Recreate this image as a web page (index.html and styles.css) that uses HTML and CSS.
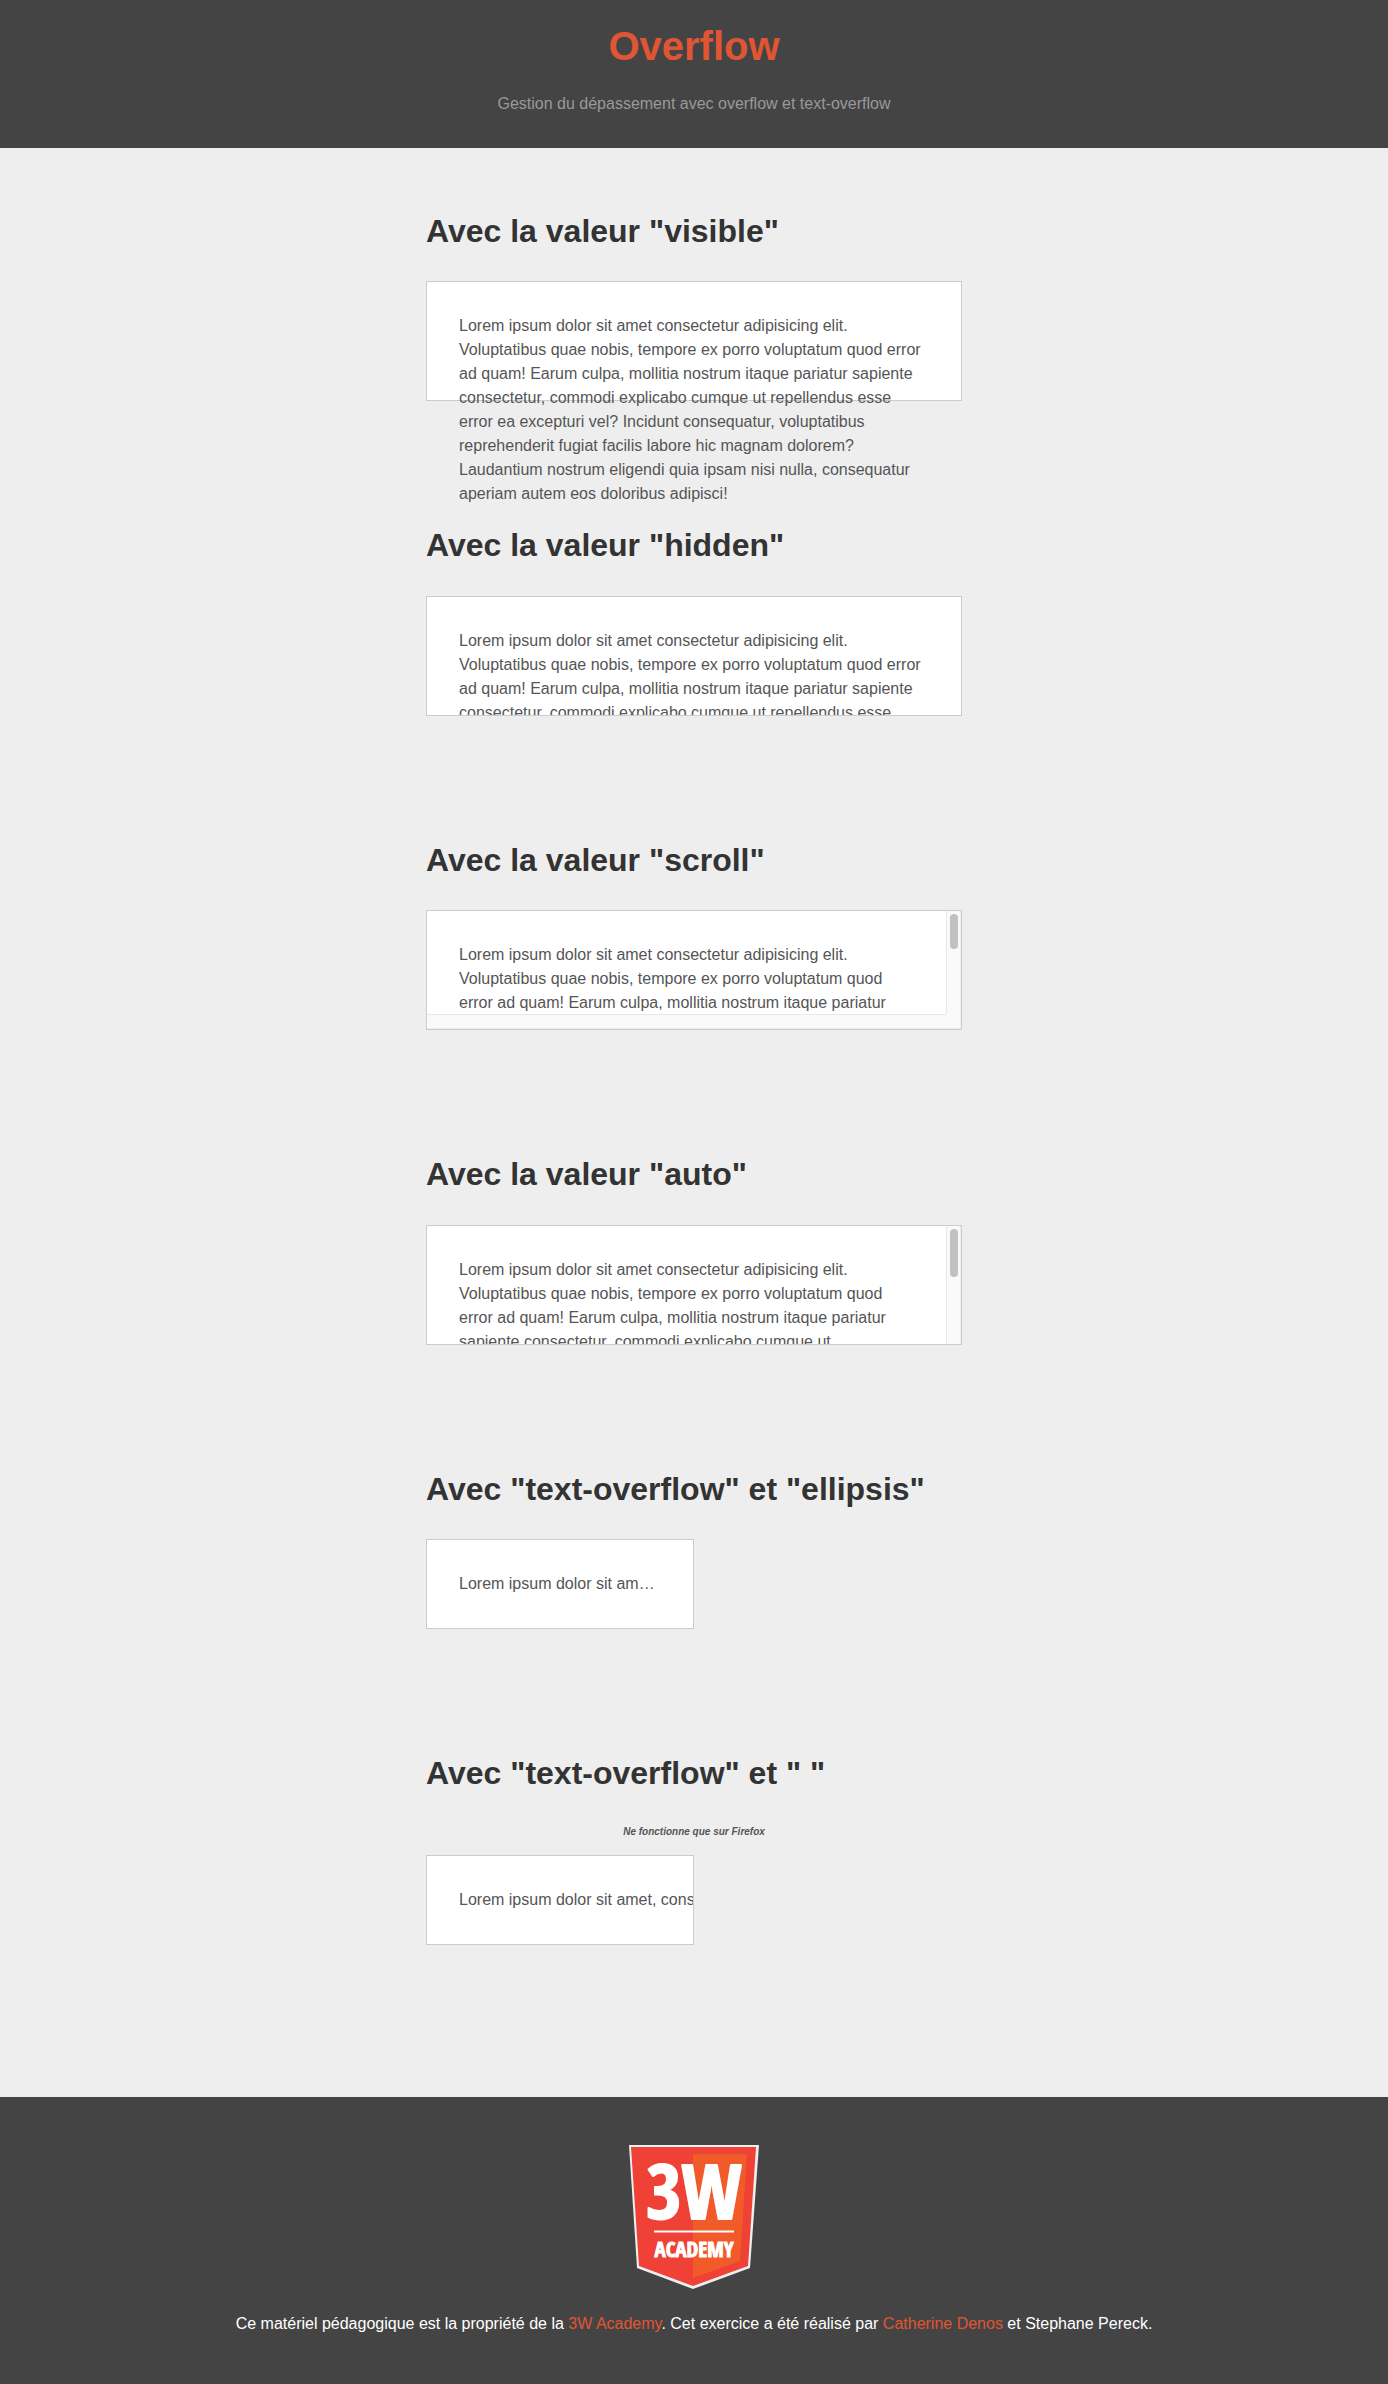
FILE: index.html
```html
<!DOCTYPE html>
<html lang="fr">
<head>
  <meta charset="utf-8">
  <meta name="viewport" content="width=device-width, initial-scale=1">
  <title>Overflow</title>
  <link rel="stylesheet" href="styles.css">
</head>
<body>
  <header class="site-header">
    <h1>Overflow</h1>
    <p>Gestion du dépassement avec overflow et text-overflow</p>
  </header>

  <main class="content">
    <section>
      <h2>Avec la valeur "visible"</h2>
      <div class="box box-visible">
        <p>Lorem ipsum dolor sit amet consectetur adipisicing elit. Voluptatibus quae nobis, tempore ex porro voluptatum quod error ad quam! Earum culpa, mollitia nostrum itaque pariatur sapiente consectetur, commodi explicabo cumque ut repellendus esse error ea excepturi vel? Incidunt consequatur, voluptatibus reprehenderit fugiat facilis labore hic magnam dolorem? Laudantium nostrum eligendi quia ipsam nisi nulla, consequatur aperiam autem eos doloribus adipisci!</p>
      </div>
    </section>

    <section>
      <h2>Avec la valeur "hidden"</h2>
      <div class="box box-hidden">
        <p>Lorem ipsum dolor sit amet consectetur adipisicing elit. Voluptatibus quae nobis, tempore ex porro voluptatum quod error ad quam! Earum culpa, mollitia nostrum itaque pariatur sapiente consectetur, commodi explicabo cumque ut repellendus esse error ea excepturi vel? Incidunt consequatur, voluptatibus reprehenderit fugiat facilis labore hic magnam dolorem? Laudantium nostrum eligendi quia ipsam nisi nulla, consequatur aperiam autem eos doloribus adipisci!</p>
      </div>
    </section>

    <section>
      <h2>Avec la valeur "scroll"</h2>
      <div class="box box-bars box-scroll">
        <div class="pane" tabindex="0">
          <p>Lorem ipsum dolor sit amet consectetur adipisicing elit. Voluptatibus quae nobis, tempore ex porro voluptatum quod error ad quam! Earum culpa, mollitia nostrum itaque pariatur sapiente consectetur, commodi explicabo cumque ut repellendus esse error ea excepturi vel? Incidunt consequatur, voluptatibus reprehenderit fugiat facilis labore hic magnam dolorem? Laudantium nostrum eligendi quia ipsam nisi nulla, consequatur aperiam autem eos doloribus adipisci!</p>
        </div>
        <div class="track track-y"><div class="thumb"></div></div>
        <div class="track track-x"></div>
        <div class="track track-corner"></div>
      </div>
    </section>

    <section>
      <h2>Avec la valeur "auto"</h2>
      <div class="box box-bars">
        <div class="pane" tabindex="0">
          <p>Lorem ipsum dolor sit amet consectetur adipisicing elit. Voluptatibus quae nobis, tempore ex porro voluptatum quod error ad quam! Earum culpa, mollitia nostrum itaque pariatur sapiente consectetur, commodi explicabo cumque ut repellendus esse error ea excepturi vel? Incidunt consequatur, voluptatibus reprehenderit fugiat facilis labore hic magnam dolorem? Laudantium nostrum eligendi quia ipsam nisi nulla, consequatur aperiam autem eos doloribus adipisci!</p>
        </div>
        <div class="track track-y"><div class="thumb"></div></div>
      </div>
    </section>

    <section>
      <h2>Avec "text-overflow" et "ellipsis"</h2>
      <div class="box box-line box-ellipsis">
        <p>Lorem ipsum dolor sit amet, consectetur adipisicing elit.</p>
      </div>
    </section>

    <section>
      <h2>Avec "text-overflow" et " "</h2>
      <p class="note">Ne fonctionne que sur Firefox</p>
      <div class="box box-line">
        <p>Lorem ipsum dolor sit amet, consectetur adipisicing elit.</p>
      </div>
    </section>
  </main>

  <footer class="site-footer">
    <svg class="logo" width="130" height="144" viewBox="0 0 130 144" role="img" aria-label="3W Academy">
      <path fill="#ecf0f1" d="M0 0H130L121 123L64 144L8 123Z"/>
      <path fill="#ef4136" d="M2 2H127L119 121L64 141L10 121Z"/>
      <path fill="#f15a29" d="M64 9H118L111 116L64 133Z"/>
      <text class="logo-main" x="65" y="74">3W</text>
      <path stroke="#fff" stroke-width="2" d="M25 86.500H105"/>
      <text class="logo-sub" x="65" y="112">ACADEMY</text>
    </svg>
    <p>Ce matériel pédagogique est la propriété de la <a href="#">3W Academy</a>. Cet exercice a été réalisé par <a href="#">Catherine Denos</a> et Stephane Pereck.</p>
  </footer>
</body>
</html>
```
FILE: styles.css
```css
* {
  box-sizing: border-box;
}

body {
  margin: 0;
  background: #eee;
  color: #555;
  font: 16px/1.5 "Helvetica Neue", Helvetica, "Liberation Sans", Arial, sans-serif;
}

p {
  margin: 0;
}

a {
  color: #e05533;
  text-decoration: none;
}

.site-header {
  padding: 16px 32px 32px;
  background: #444;
  color: #999;
  text-align: center;
}

h1 {
  margin: 0 0 16px;
  color: #e05533;
  font-size: 40px;
}

h2 {
  color: #333;
  font-size: 32px;
}

.content {
  max-width: 600px;
  margin: 0 auto;
  padding: 32px;
  display: flow-root;
}

.box {
  height: 120px;
  margin-bottom: 120px;
  padding: 32px;
  border: 1px solid #ccc;
  background: #fff;
}

.box-visible {
  overflow: visible;
}

.box-hidden {
  overflow: hidden;
}

/* Scrollable boxes: text pane plus always-visible scroll tracks */
.box-bars {
  display: grid;
  grid-template-columns: 1fr 15px;
  grid-template-rows: minmax(0, 1fr);
  padding: 0;
}

.box-scroll {
  grid-template-rows: minmax(0, 1fr) 15px;
}

.pane {
  padding: 32px;
  overflow: auto;
  scrollbar-width: none;
}

.track {
  background: #fafafa;
}

.track-y {
  padding: 3px 2px 3px 3px;
  border-right: 1px solid #eee;
  border-left: 1px solid #e8e8e8;
}

.track-x {
  border-top: 1px solid #e8e8e8;
  border-bottom: 1px solid #eee;
}

.track-corner {
  border-right: 1px solid #eee;
  border-bottom: 1px solid #eee;
}

.thumb {
  height: 48px;
  border-radius: 4px;
  background: #c1c1c1;
}

.box-scroll .thumb {
  height: 35px;
}

.box-line {
  width: 50%;
  height: auto;
  overflow: hidden;
  white-space: nowrap;
}

.box-ellipsis p {
  overflow: hidden;
  text-overflow: ellipsis;
}

.note {
  margin-bottom: 16px;
  font-size: 10px;
  font-style: italic;
  font-weight: bold;
  text-align: center;
}

.site-footer {
  padding: 48px 32px;
  background: #444;
  color: #fff;
  text-align: center;
}

.logo {
  display: block;
  margin: 0 auto 23px;
}

.logo text {
  fill: #fff;
  stroke: #fff;
  stroke-linejoin: round;
  font-family: "Liberation Sans Narrow", "Open Sans Condensed", "Roboto Condensed", "DejaVu Sans Condensed", sans-serif;
  font-weight: bold;
  text-anchor: middle;
}

.logo-main {
  font-size: 76px;
  stroke-width: 2px;
}

.logo-sub {
  font-size: 21px;
  stroke-width: 1px;
}
```
